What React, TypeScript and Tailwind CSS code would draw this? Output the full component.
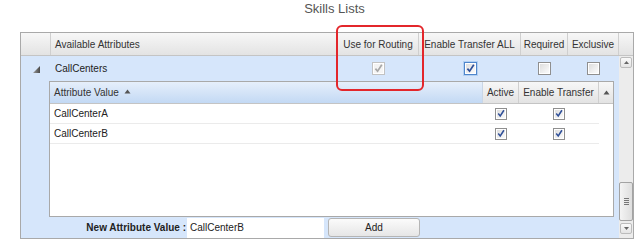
import React from 'react';

type BoxKind = 'checked' | 'unchecked' | 'disabled' | 'focused';

const CheckBox = ({ kind, size = 13 }: { kind: BoxKind; size?: number }) => {
  const border =
    kind === 'disabled' ? 'border-[#c2c2c2]' : kind === 'focused' ? 'border-[#4f86cc]' : 'border-[#8f8f8f]';
  const ring = kind === 'focused' ? 'shadow-[0_0_0_1px_#b3d0f2]' : '';
  const fill = kind === 'disabled' ? 'from-[#f2f2f2] to-[#f6f6f6]' : 'from-[#dedede] to-[#fbfbfb]';
  const tick = kind === 'disabled' ? '#a7a7a7' : '#2f4f98';
  return (
    <span
      className={`inline-flex items-center justify-center border bg-white ${border} ${ring}`}
      style={{ width: size, height: size }}
    >
      <span className={`flex h-full w-full items-center justify-center border border-white bg-gradient-to-br ${fill}`}>
        {kind !== 'unchecked' && (
          <svg width="9" height="9" viewBox="0 0 9 9">
            <path d="M1.4 4.6 L3.6 7.2 L7.8 0.8" fill="none" stroke={tick} strokeWidth="1.7" />
          </svg>
        )}
      </span>
    </span>
  );
};

const headCell = 'flex items-center border-r border-[#cfcfcf] h-full';

export default function App() {
  return (
    <div className="relative h-[245px] w-[643px] bg-white font-['Liberation_Sans',Arial,sans-serif] text-[10px] text-[#222]">
      <div className="flex h-[32px] justify-center pl-[26px] pt-[1px] text-[13px] leading-[15px] text-[#555]">
        Skills Lists
      </div>

      <div className="ml-[20px] flex h-[207px] w-[614px] flex-col border border-[#a9a9a9]">
        {/* outer header */}
        <div className="flex h-[23px] shrink-0 border-b border-[#c4c4c4] bg-gradient-to-b from-[#f7f7f7] to-[#e3e3e3] text-[#333]">
          <div className={`${headCell} w-[30px]`} />
          <div className={`${headCell} w-[287px] pl-[4px]`}>Available Attributes</div>
          <div className={`${headCell} w-[81px] justify-center`}>Use for Routing</div>
          <div className={`${headCell} w-[102px] justify-center`}>Enable Transfer ALL</div>
          <div className={`${headCell} w-[47px] justify-center`}>Required</div>
          <div className={`${headCell} w-[51px] justify-center`}>Exclusive</div>
          <div className="w-[14px]" />
        </div>

        <div className="flex min-h-0 flex-1">
          <div className="flex w-[598px] flex-col bg-[#d6e6fb]">
            {/* CallCenters row */}
            <div className="flex h-[25px] shrink-0 items-center">
              <div className="flex w-[30px] justify-center">
                <svg width="7" height="7" viewBox="0 0 7 7" className="mt-[1px]">
                  <defs>
                    <linearGradient id="tri" x1="0" y1="0" x2="1" y2="0">
                      <stop offset="0" stopColor="#9a9a9a" />
                      <stop offset="1" stopColor="#4a4a4a" />
                    </linearGradient>
                  </defs>
                  <polygon points="7,0 7,7 0,7" fill="url(#tri)" />
                </svg>
              </div>
              <div className="w-[287px] pl-[4px]">CallCenters</div>
              <div className="flex w-[81px] justify-center">
                <CheckBox kind="disabled" />
              </div>
              <div className="flex w-[102px] justify-center">
                <CheckBox kind="focused" />
              </div>
              <div className="flex w-[47px] justify-center">
                <CheckBox kind="unchecked" />
              </div>
              <div className="flex w-[51px] justify-center">
                <CheckBox kind="unchecked" />
              </div>
            </div>

            {/* nested grid */}
            <div className="ml-[28px] flex h-[136px] w-[565px] shrink-0 flex-col border border-[#a9a9a9] bg-white">
              <div className="flex h-[22px] shrink-0 border-b border-[#c4c4c4] text-[#333]">
                <div className="flex h-full w-[433px] items-center border-r border-[#c9d6e6] bg-gradient-to-b from-[#e6effb] to-[#c3d9f4] pl-[4px]">
                  Attribute Value
                  <svg width="7" height="5" viewBox="0 0 7 5" className="ml-[5px] mb-[2px]">
                    <polygon points="3.5,0.5 6.5,4.5 0.5,4.5" fill="#555" />
                  </svg>
                </div>
                <div className="flex h-full flex-1 bg-gradient-to-b from-[#f7f7f7] to-[#e3e3e3]">
                  <div className={`${headCell} w-[36px] justify-center`}>Active</div>
                  <div className={`${headCell} w-[80px] justify-center`}>Enable Transfer</div>
                  <div className="flex w-[14px] items-center justify-center">
                    <svg width="7" height="5" viewBox="0 0 7 5">
                      <polygon points="3.5,0.5 6.5,4.5 0.5,4.5" fill="#555" />
                    </svg>
                  </div>
                </div>
              </div>
              {['CallCenterA', 'CallCenterB'].map((name) => (
                <div key={name} className="flex h-[20px] w-[549px] shrink-0 items-center border-b border-[#ebebeb]">
                  <div className="w-[433px] pl-[4px]">{name}</div>
                  <div className="flex w-[36px] justify-center">
                    <CheckBox kind="checked" size={12} />
                  </div>
                  <div className="flex w-[80px] justify-center">
                    <CheckBox kind="checked" size={12} />
                  </div>
                </div>
              ))}
            </div>

            {/* add row */}
            <div className="flex flex-1 items-center">
              <div className="w-[166px] pr-[1px] text-right font-bold text-[#222]">New Attribute Value :</div>
              <div className="flex h-[20px] w-[137px] items-center bg-white pl-[3px]">CallCenterB</div>
              <button className="ml-[4px] h-[19px] w-[92px] rounded-[3px] border border-[#b5b5b5] bg-gradient-to-b from-[#fbfbfb] to-[#e6e6e6] text-[10px] text-[#222]">
                Add
              </button>
            </div>
          </div>

          {/* scrollbar */}
          <div className="flex w-[14px] flex-col items-center bg-[#ececec] py-[1px]">
            <div className="flex h-[11px] w-[12px] items-center justify-center rounded-[2px] border border-[#bcbcbc] bg-gradient-to-b from-[#fafafa] to-[#e4e4e4]">
              <svg width="5" height="3" viewBox="0 0 5 3">
                <polygon points="2.5,0 5,3 0,3" fill="#666" />
              </svg>
            </div>
            <div className="flex-1" />
            <div className="flex h-[39px] w-[14px] flex-col items-center justify-center gap-[1px] rounded-[2px] border border-[#a3a3a3] bg-gradient-to-r from-[#f4f4f4] to-[#dedede]">
              <span className="h-px w-[5px] bg-[#777]" />
              <span className="h-px w-[5px] bg-[#777]" />
              <span className="h-px w-[5px] bg-[#777]" />
              <span className="h-px w-[5px] bg-[#777]" />
            </div>
            <div className="mt-[2px] mb-[3px] flex h-[11px] w-[12px] items-center justify-center rounded-[2px] border border-[#bcbcbc] bg-gradient-to-b from-[#fafafa] to-[#e4e4e4]">
              <svg width="5" height="3" viewBox="0 0 5 3">
                <polygon points="0,0 5,0 2.5,3" fill="#666" />
              </svg>
            </div>
          </div>
        </div>
      </div>

      {/* highlight annotation */}
      <div className="pointer-events-none absolute left-[336px] top-[25px] h-[66px] w-[88px] rounded-[6px] border-2 border-[#e3262b]" />
    </div>
  );
}
